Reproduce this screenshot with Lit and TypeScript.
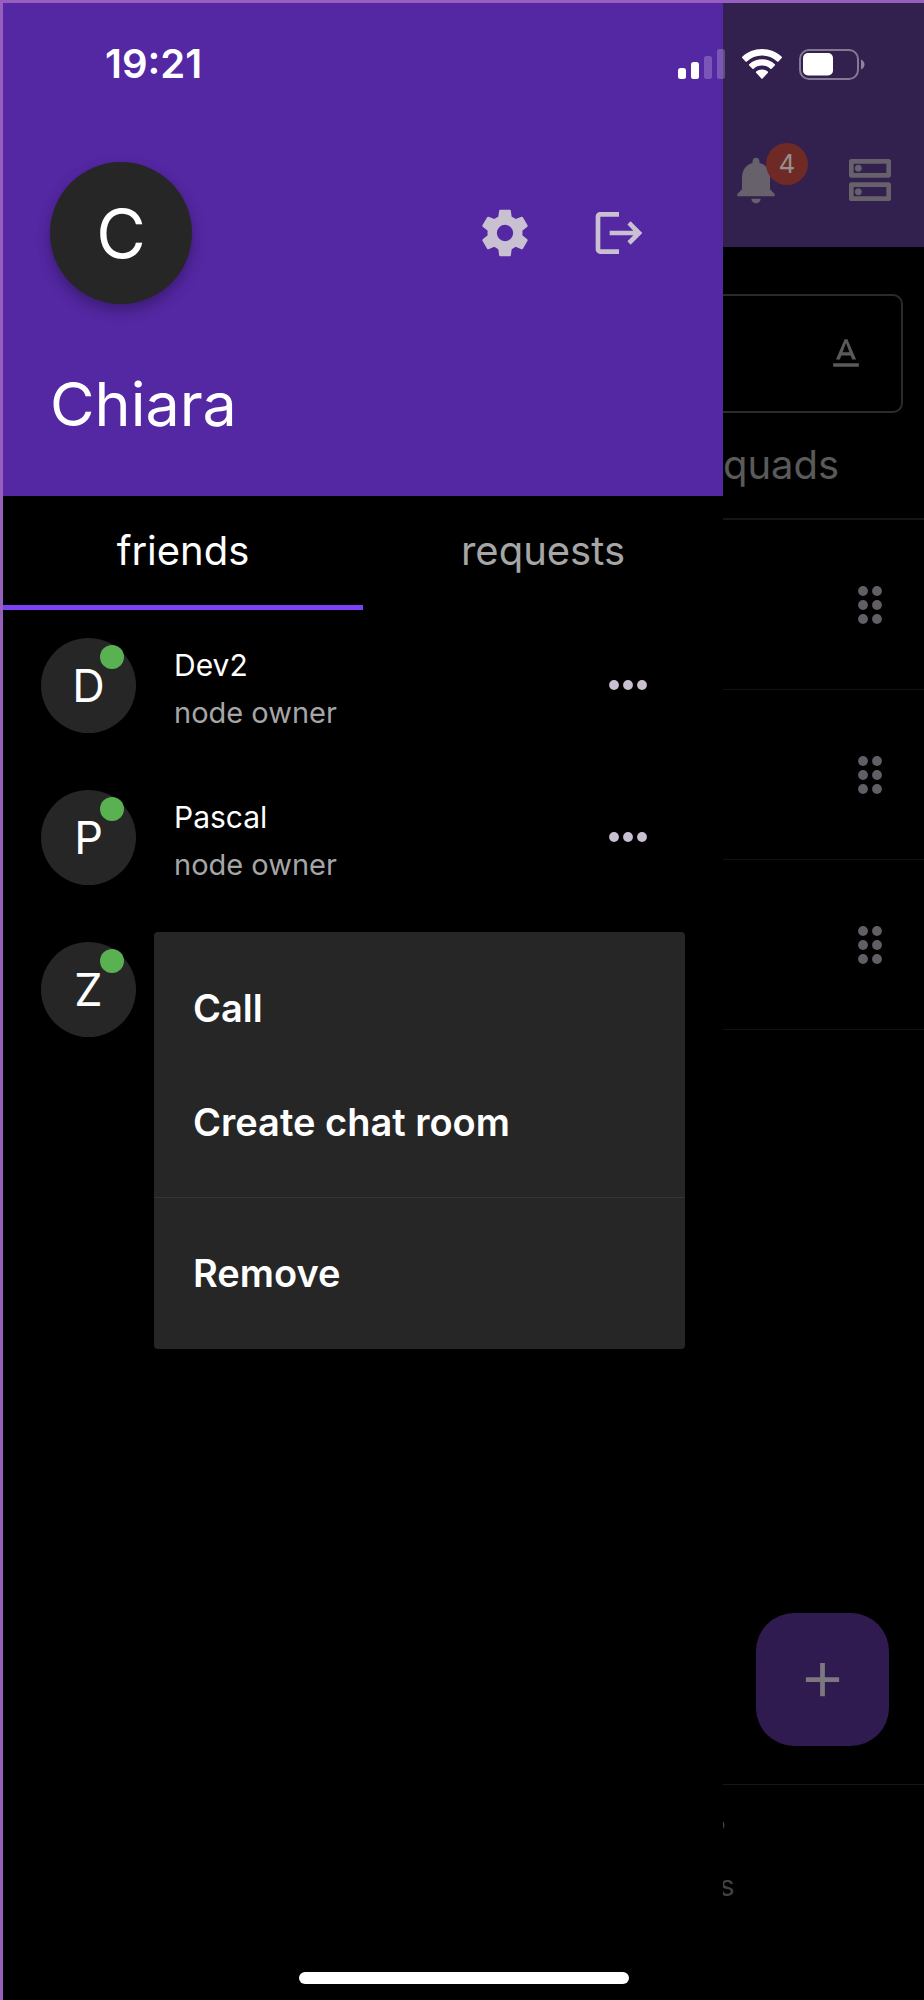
import { LitElement, html, css, svg, nothing } from "lit";
import { customElement, property, state } from "lit/decorators.js";
import { classMap } from "lit/directives/class-map.js";

const icons: Record<string, string> = {
  settings:
    "M12,15.5A3.5,3.5 0 0,1 8.5,12A3.5,3.5 0 0,1 12,8.5A3.5,3.5 0 0,1 15.5,12A3.5,3.5 0 0,1 12,15.5M19.43,12.97C19.47,12.65 19.5,12.33 19.5,12C19.5,11.67 19.47,11.34 19.43,11L21.54,9.37C21.73,9.22 21.78,8.95 21.66,8.73L19.66,5.27C19.54,5.05 19.27,4.96 19.05,5.05L16.56,6.05C16.04,5.66 15.5,5.32 14.87,5.07L14.5,2.42C14.46,2.18 14.25,2 14,2H10C9.75,2 9.54,2.18 9.5,2.42L9.13,5.07C8.5,5.32 7.96,5.66 7.44,6.05L4.95,5.05C4.73,4.96 4.46,5.05 4.34,5.27L2.34,8.73C2.21,8.95 2.27,9.22 2.46,9.37L4.57,11C4.53,11.34 4.5,11.67 4.5,12C4.5,12.33 4.53,12.65 4.57,12.97L2.46,14.63C2.27,14.78 2.21,15.05 2.34,15.27L4.34,18.73C4.46,18.95 4.73,19.03 4.95,18.95L7.44,17.94C7.96,18.34 8.5,18.68 9.13,18.93L9.5,21.58C9.54,21.82 9.75,22 10,22H14C14.25,22 14.46,21.82 14.5,21.58L14.87,18.93C15.5,18.67 16.04,18.34 16.56,17.94L19.05,18.95C19.27,19.03 19.54,18.95 19.66,18.73L21.66,15.27C21.78,15.05 21.73,14.78 21.54,14.63L19.43,12.97Z",
  logout:
    "M17 7l-1.41 1.41L18.17 11H8v2h10.17l-2.58 2.58L17 17l5-5zM4 5h8V3H4c-1.1 0-2 .9-2 2v14c0 1.1.9 2 2 2h8v-2H4V5z",
  bell:
    "M12 22c1.1 0 2-.9 2-2h-4c0 1.1.89 2 2 2zm6-6v-5c0-3.07-1.64-5.64-4.5-6.32V4c0-.83-.67-1.5-1.5-1.5s-1.5.67-1.5 1.5v.68C7.63 5.36 6 7.92 6 11v5l-2 2v1h16v-1l-2-2z",
  servers:
    "M19 15v4H5v-4h14m1-2H4c-.55 0-1 .45-1 1v6c0 .55.45 1 1 1h16c.55 0 1-.45 1-1v-6c0-.55-.45-1-1-1zM7 18.5c-.82 0-1.5-.67-1.5-1.5s.68-1.5 1.5-1.5 1.5.67 1.5 1.5-.67 1.5-1.5 1.5zM19 5v4H5V5h14m1-2H4c-.55 0-1 .45-1 1v6c0 .55.45 1 1 1h16c.55 0 1-.45 1-1V4c0-.55-.45-1-1-1zM7 8.5c-.82 0-1.5-.67-1.5-1.5S6.18 5.5 7 5.5s1.5.68 1.5 1.5S7.83 8.5 7 8.5z",
  format:
    "M5 17v2h14v-2H5zm4.5-4.2h5l.9 2.2h2.1L12.75 4h-1.5L6.5 15h2.1l.9-2.2zM12 5.98L13.87 11h-3.74L12 5.98z",
  plus: "M19 13h-6v6h-2v-6H5v-2h6V5h2v6h6z",
};

const icon = (name: string) =>
  html`<svg class="icon" viewBox="0 0 24 24" aria-hidden="true"><path d=${icons[name]} /></svg>`;

const dots = (points: number[][]) =>
  html`<svg class="icon" viewBox="0 0 24 24" aria-hidden="true">
    ${points.map(([x, y]) => svg`<circle cx=${x} cy=${y} r="2.1" />`)}
  </svg>`;

const moreDots = [[6, 12], [12, 12], [18, 12]];
const gripDots = [[9, 6], [15, 6], [9, 12], [15, 12], [9, 18], [15, 18]];

const shared = css`
  * { box-sizing: border-box; }
  button {
    appearance: none;
    border: 0;
    margin: 0;
    padding: 0;
    background: none;
    color: inherit;
    font: inherit;
    cursor: pointer;
  }
  .icon { display: block; width: 100%; height: 100%; fill: currentColor; }
  .icon-button { display: block; flex: none; width: 56px; height: 56px; }
`;

@customElement("status-bar")
class StatusBar extends LitElement {
  static styles = css`
    :host {
      display: flex;
      justify-content: space-between;
      align-items: center;
      height: 60px;
      margin-top: 31px;
      padding: 0 59px 0 102px;
      color: #fff;
      pointer-events: none;
    }
    .time { font-size: 40px; font-weight: 600; line-height: 60px; }
    .signs { display: flex; align-items: center; gap: 17px; }
    svg { display: block; }
  `;

  render() {
    return html`
      <span class="time">19:21</span>
      <div class="signs">
        <svg width="47" height="30" viewBox="0 0 47 30" fill="#fff" role="img" aria-label="Signal">
          <rect x="0" y="19" width="8" height="11" rx="2.5" />
          <rect x="13" y="13" width="8" height="17" rx="2.5" />
          <rect x="26" y="7" width="8" height="23" rx="2.5" opacity=".22" />
          <rect x="39" y="0" width="8" height="30" rx="2.5" opacity=".22" />
        </svg>
        <svg width="40" height="30" viewBox="0 0 40 30" fill="#fff" role="img" aria-label="Wi-Fi">
          <path d="M20 0C12.3 0 5.2 3 .3 7.8c-.4.4-.4.9 0 1.3l3.2 3.3c.4.4 1 .4 1.4 0C8.9 8.7 14.2 6.5 20 6.5s11.1 2.200 15.100 5.900c.4.4 1 .4 1.400 0l3.200-3.300c.4-.4.4-.9 0-1.300C34.800 3 27.700 0 20 0z" />
          <path d="M20 10.300c-4.900 0-9.400 1.800-12.800 4.900-.4.4-.4 1 0 1.300l3.200 3.300c.4.4.9.4 1.300 0 2.200-2 5.100-3.200 8.300-3.200s6.100 1.200 8.300 3.200c.4.4.9.4 1.300 0l3.200-3.300c.4-.4.4-.9 0-1.300-3.400-3.100-7.900-4.900-12.800-4.900z" />
          <path d="M20 20.500c-2.200 0-4.300.8-5.800 2.100-.4.3-.4.800-.1 1.200l5.300 5.700c.3.4.9.4 1.200 0l5.300-5.700c.3-.4.3-.9-.1-1.200-1.500-1.300-3.600-2.100-5.800-2.100z" />
        </svg>
        <svg width="66" height="31" viewBox="0 0 66 31" fill="#fff" role="img" aria-label="Battery">
          <rect x="1" y="1" width="58" height="29" rx="9" fill="none" stroke="#fff" stroke-width="2" opacity=".4" />
          <rect x="4" y="4" width="30" height="22.5" rx="5" />
          <path d="M62 10.500c2 .8 3.500 2.700 3.500 5s-1.500 4.200-3.500 5z" opacity=".45" />
        </svg>
      </div>
    `;
  }
}

@customElement("friend-row")
class FriendRow extends LitElement {
  @property() initial = "";
  @property() name = "";
  @property() role = "";

  static styles = [
    shared,
    css`
      :host { display: block; }
      .row {
        display: flex;
        align-items: center;
        gap: 38px;
        height: 152px;
        padding: 0 67px 2px 38px;
      }
      .avatar {
        position: relative;
        display: grid;
        place-items: center;
        flex: none;
        width: 95px;
        height: 95px;
        border-radius: 50%;
        background: #262626;
        color: #fff;
        font-size: 45px;
      }
      .online {
        position: absolute;
        top: 7px;
        right: 12px;
        width: 24px;
        height: 24px;
        border-radius: 50%;
        background: #59b152;
      }
      .text { flex: 1; padding-top: 8px; font-size: 30px; line-height: 48px; color: #fff; }
      .role { color: #a6a6a6; font-size: 29px; }
      .more { color: #c9c1d2; }
    `,
  ];

  render() {
    return html`
      <div class="row">
        <span class="avatar">${this.initial}<span class="online"></span></span>
        ${this.name
          ? html`<div class="text">
                <div>${this.name}</div>
                <div class="role">${this.role}</div>
              </div>
              <button class="icon-button more" aria-label="More">${dots(moreDots)}</button>`
          : nothing}
      </div>
    `;
  }
}

@customElement("side-drawer")
class SideDrawer extends LitElement {
  @state() tab = "friends";

  static styles = [
    shared,
    css`
      :host { display: block; background: #000; color: #fff; }
      .head { padding: 159px 76px 56px 47px; background: #5427a3; }
      .profile { display: flex; align-items: center; gap: 58px; }
      .avatar {
        display: grid;
        place-items: center;
        width: 142px;
        height: 142px;
        margin-right: auto;
        border-radius: 50%;
        background: #262626;
        box-shadow: 0 6px 14px rgba(0, 0, 0, 0.3);
        font-size: 68px;
      }
      .tool { color: #c9c1d2; }
      .name { margin: 64px 0 0; font-size: 61px; font-weight: 400; line-height: 72px; }
      .tabs { display: grid; grid-template-columns: 1fr 1fr; }
      .tab {
        height: 114px;
        border-bottom: 5px solid transparent;
        color: #a6a6a6;
        font-size: 40px;
      }
      .tab.active { border-color: #7c40f5; color: #fff; }
      .list { margin: 0; padding: 0; list-style: none; }
      .item { position: relative; }
      .menu {
        position: absolute;
        top: 18px;
        left: 151px;
        right: 38px;
        padding: 19px 0;
        border-radius: 4px;
        background: #262626;
      }
      .entry {
        display: block;
        width: 100%;
        height: 114px;
        padding: 0 39px;
        font-size: 38px;
        font-weight: 600;
        text-align: left;
      }
      .rule { height: 1px; margin: 18px 0; border: 0; background: #353535; }
    `,
  ];

  render() {
    return html`
      <header class="head">
        <div class="profile">
          <span class="avatar">C</span>
          <button class="icon-button tool" aria-label="Settings">${icon("settings")}</button>
          <button class="icon-button tool" aria-label="Log out">${icon("logout")}</button>
        </div>
        <h1 class="name">Chiara</h1>
      </header>
      <div class="tabs" role="tablist">
        ${["friends", "requests"].map(
          (t) => html`<button
            role="tab"
            aria-selected=${this.tab === t}
            class=${classMap({ tab: true, active: this.tab === t })}
            @click=${() => (this.tab = t)}
          >${t}</button>`
        )}
      </div>
      <ul class="list">
        <li class="item"><friend-row initial="D" name="Dev2" role="node owner"></friend-row></li>
        <li class="item"><friend-row initial="P" name="Pascal" role="node owner"></friend-row></li>
        <li class="item">
          <friend-row initial="Z"></friend-row>
          <div class="menu" role="menu">
            <button class="entry" role="menuitem">Call</button>
            <button class="entry" role="menuitem">Create chat room</button>
            <hr class="rule" />
            <button class="entry" role="menuitem">Remove</button>
          </div>
        </li>
      </ul>
    `;
  }
}

@customElement("main-page")
class MainPage extends LitElement {
  static styles = [
    shared,
    css`
      :host { display: flex; flex-direction: column; background: #000; }
      .bar {
        display: flex;
        justify-content: flex-end;
        gap: 58px;
        padding: 149px 26px 39px;
        background: #32204f;
        color: #66616b;
      }
      .alerts { position: relative; }
      .badge {
        position: absolute;
        top: -9px;
        left: 38px;
        width: 42px;
        height: 42px;
        border-radius: 50%;
        background: #702a26;
        color: #94918f;
        font-size: 26px;
        line-height: 42px;
        text-align: center;
      }
      .search {
        display: flex;
        align-items: center;
        height: 119px;
        margin: 47px 21px 0;
        padding: 0 33px;
        border: 2px solid #2b2b2b;
        border-radius: 10px;
      }
      .field {
        flex: 1;
        min-width: 0;
        height: 100%;
        border: 0;
        outline: 0;
        background: none;
        color: #5a5a5a;
        font: inherit;
        font-size: 40px;
      }
      .format { width: 44px; height: 44px; color: #5a5a5a; }
      .tabs {
        display: grid;
        grid-template-columns: repeat(3, 1fr);
        border-bottom: 2px solid #151515;
      }
      .tab { grid-column: 3; height: 105px; padding-bottom: 2px; color: #5a5a5a; font-size: 40px; }
      .list { margin: 0; padding: 0; list-style: none; }
      .row {
        display: flex;
        align-items: center;
        justify-content: flex-end;
        height: 170px;
        padding: 0 26px;
        border-bottom: 1px solid #121212;
        color: #625e66;
      }
      .add {
        align-self: flex-end;
        width: 133px;
        height: 133px;
        margin: auto 35px 38px;
        padding: 38px;
        border-radius: 38px;
        background: #2f1b50;
        color: #7b7880;
      }
      .nav {
        display: grid;
        grid-template-columns: 1fr 1fr;
        height: 216px;
        border-top: 1px solid #151515;
      }
      .link {
        grid-column: 2;
        display: flex;
        flex-direction: column;
        align-items: center;
        gap: 14px;
        padding-top: 10px;
        color: #424242;
        font-size: 28px;
        line-height: 34px;
        text-decoration: none;
      }
      .hub { width: 63px; height: 60px; fill: currentColor; stroke: currentColor; stroke-width: 3; }
    `,
  ];

  render() {
    return html`
      <header class="bar">
        <button class="icon-button alerts" aria-label="Notifications">
          ${icon("bell")}<span class="badge">4</span>
        </button>
        <button class="icon-button" aria-label="Servers">${icon("servers")}</button>
      </header>
      <div class="search">
        <input class="field" type="search" aria-label="Search" />
        <button class="format" aria-label="Text format">${icon("format")}</button>
      </div>
      <div class="tabs" role="tablist">
        <button class="tab" role="tab">squads</button>
      </div>
      <ul class="list">
        ${[0, 1, 2].map(
          () => html`<li class="row">
            <button class="icon-button" aria-label="Reorder">${dots(gripDots)}</button>
          </li>`
        )}
      </ul>
      <button class="add" aria-label="Add">${icon("plus")}</button>
      <nav class="nav">
        <a class="link" href="#nodes">
          <svg class="hub" viewBox="0 0 63 60" aria-hidden="true">
            <path d="M6 30H57" />
            <circle cx="6" cy="30" r="4" />
            <circle cx="31" cy="30" r="9" />
            <circle cx="57" cy="30" r="4" />
          </svg>
          nodes
        </a>
      </nav>
    `;
  }
}

@customElement("app-root")
class AppRoot extends LitElement {
  static styles = css`
    :host {
      box-sizing: border-box;
      display: grid;
      grid-template: 1fr / 1fr;
      min-height: 100vh;
      border-top: 3px solid #975fbd;
      border-left: 3px solid #975fbd;
      background: #000;
      font-family: Inter, "Liberation Sans", sans-serif;
    }
    main-page, side-drawer, status-bar, .home { grid-area: 1 / 1; min-width: 0; }
    side-drawer { width: 720px; max-width: 80%; z-index: 1; }
    status-bar { align-self: start; z-index: 2; }
    .home {
      align-self: end;
      justify-self: center;
      width: 330px;
      height: 12px;
      margin-bottom: 16px;
      border-radius: 6px;
      background: #fff;
      z-index: 2;
    }
  `;

  render() {
    return html`
      <main-page></main-page>
      <side-drawer></side-drawer>
      <status-bar></status-bar>
      <div class="home"></div>
    `;
  }
}
